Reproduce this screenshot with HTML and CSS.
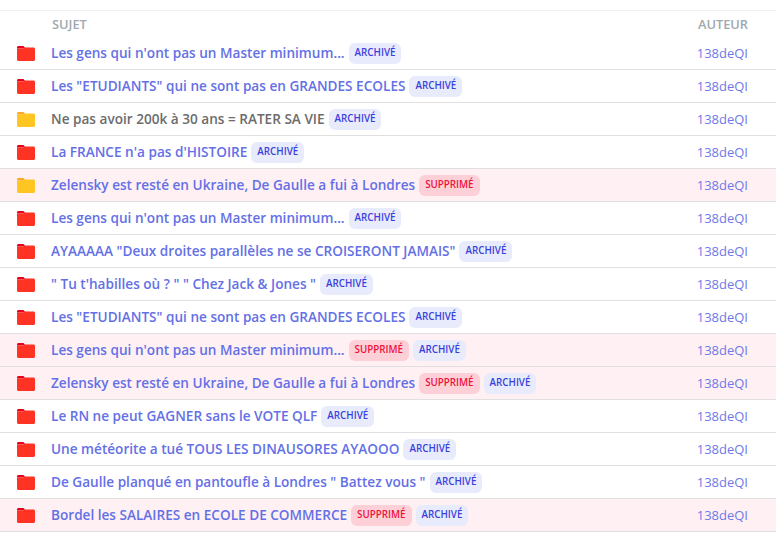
FILE: index.html
```html
<!DOCTYPE html>
<html lang="fr">
<head>
  <meta charset="UTF-8" />
  <title>Sujets</title>
  <link rel="stylesheet" href="styles.css">
</head>
<body>
  <svg class="defs" width="0" height="0">
    <symbol id="folder" viewBox="0 0 18 15">
      <path class="folder-tab" d="M1.5 0H6.5L8.5 2.5H0V1.5C0 .7 .7 0 1.5 0Z"/>
      <path class="folder-body" d="M0 2.5H6.5L7.5 1.5H16.5C17.3 1.5 18 2.2 18 3V13.5C18 14.3 17.3 15 16.5 15H1.5C.7 15 0 14.3 0 13.5Z"/>
    </symbol>
  </svg>
  <div class="topics">
    <div class="head">
      <span class="head-subject">SUJET</span>
      <span class="head-author">AUTEUR</span>
    </div>

    <div class="row">
      <svg class="folder red"><use href="#folder"/></svg>
      <div class="subject"><a>Les gens qui n'ont pas un Master minimum...</a><span class="badge archived">ARCHIVÉ</span></div>
      <a class="author">138deQI</a>
    </div>
    <div class="row">
      <svg class="folder red"><use href="#folder"/></svg>
      <div class="subject"><a>Les "ETUDIANTS" qui ne sont pas en GRANDES ECOLES</a><span class="badge archived">ARCHIVÉ</span></div>
      <a class="author">138deQI</a>
    </div>
    <div class="row">
      <svg class="folder yellow"><use href="#folder"/></svg>
      <div class="subject"><a class="visited">Ne pas avoir 200k à 30 ans = RATER SA VIE</a><span class="badge archived">ARCHIVÉ</span></div>
      <a class="author">138deQI</a>
    </div>
    <div class="row">
      <svg class="folder red"><use href="#folder"/></svg>
      <div class="subject"><a>La FRANCE n'a pas d'HISTOIRE</a><span class="badge archived">ARCHIVÉ</span></div>
      <a class="author">138deQI</a>
    </div>
    <div class="row deleted">
      <svg class="folder yellow"><use href="#folder"/></svg>
      <div class="subject"><a>Zelensky est resté en Ukraine, De Gaulle a fui à Londres</a><span class="badge removed">SUPPRIMÉ</span></div>
      <a class="author">138deQI</a>
    </div>
    <div class="row">
      <svg class="folder red"><use href="#folder"/></svg>
      <div class="subject"><a>Les gens qui n'ont pas un Master minimum...</a><span class="badge archived">ARCHIVÉ</span></div>
      <a class="author">138deQI</a>
    </div>
    <div class="row">
      <svg class="folder red"><use href="#folder"/></svg>
      <div class="subject"><a>AYAAAAA "Deux droites parallèles ne se CROISERONT JAMAIS"</a><span class="badge archived">ARCHIVÉ</span></div>
      <a class="author">138deQI</a>
    </div>
    <div class="row">
      <svg class="folder red"><use href="#folder"/></svg>
      <div class="subject"><a>" Tu t'habilles où ? " " Chez Jack &amp; Jones "</a><span class="badge archived">ARCHIVÉ</span></div>
      <a class="author">138deQI</a>
    </div>
    <div class="row">
      <svg class="folder red"><use href="#folder"/></svg>
      <div class="subject"><a>Les "ETUDIANTS" qui ne sont pas en GRANDES ECOLES</a><span class="badge archived">ARCHIVÉ</span></div>
      <a class="author">138deQI</a>
    </div>
    <div class="row deleted">
      <svg class="folder red"><use href="#folder"/></svg>
      <div class="subject"><a>Les gens qui n'ont pas un Master minimum...</a><span class="badge removed">SUPPRIMÉ</span><span class="badge archived">ARCHIVÉ</span></div>
      <a class="author">138deQI</a>
    </div>
    <div class="row deleted">
      <svg class="folder red"><use href="#folder"/></svg>
      <div class="subject"><a>Zelensky est resté en Ukraine, De Gaulle a fui à Londres</a><span class="badge removed">SUPPRIMÉ</span><span class="badge archived">ARCHIVÉ</span></div>
      <a class="author">138deQI</a>
    </div>
    <div class="row">
      <svg class="folder red"><use href="#folder"/></svg>
      <div class="subject"><a>Le RN ne peut GAGNER sans le VOTE QLF</a><span class="badge archived">ARCHIVÉ</span></div>
      <a class="author">138deQI</a>
    </div>
    <div class="row">
      <svg class="folder red"><use href="#folder"/></svg>
      <div class="subject"><a>Une météorite a tué TOUS LES DINAUSORES AYAOOO</a><span class="badge archived">ARCHIVÉ</span></div>
      <a class="author">138deQI</a>
    </div>
    <div class="row">
      <svg class="folder red"><use href="#folder"/></svg>
      <div class="subject"><a>De Gaulle planqué en pantoufle à Londres " Battez vous "</a><span class="badge archived">ARCHIVÉ</span></div>
      <a class="author">138deQI</a>
    </div>
    <div class="row deleted">
      <svg class="folder red"><use href="#folder"/></svg>
      <div class="subject"><a>Bordel les SALAIRES en ECOLE DE COMMERCE</a><span class="badge removed">SUPPRIMÉ</span><span class="badge archived">ARCHIVÉ</span></div>
      <a class="author">138deQI</a>
    </div>
  </div>
</body>
</html>
```

FILE: styles.css
```css
body {
  margin: 0;
  padding-top: 10px;
  background: #fff;
  font-family: "Open Sans", sans-serif;
  overflow: hidden;
}
.defs {
  position: absolute;
}
.topics {
  display: flex;
  flex-direction: column;
}
.head {
  display: flex;
  align-items: center;
  justify-content: space-between;
  height: 26px;
  padding: 0 28px 0 52px;
  border-top: 1px solid #f1f1f1;
  font-size: 12.8px;
  font-weight: 600;
  color: #a0a8b0;
}
.row {
  display: flex;
  align-items: center;
  height: 32px;
  padding: 0 28px 0 17px;
  border-bottom: 1px solid #e0e0e0;
}
.row.deleted {
  background: #fff1f3;
}
.folder {
  flex: none;
  width: 18px;
  height: 15px;
  margin-top: 1px;
  margin-right: 16px;
}
.folder.red {
  --tab: #e4001c;
  --body: #ff3324;
}
.folder.yellow {
  --tab: #ffa726;
  --body: #ffc623;
}
.folder-tab {
  fill: var(--tab);
}
.folder-body {
  fill: var(--body);
}
.subject {
  flex: 1;
  display: flex;
  align-items: center;
  font-size: 13.6px;
  font-weight: 600;
  color: #6470e6;
}
.subject a {
  margin-bottom: 2px;
}
.subject .visited {
  color: #6c6c6c;
}
.badge {
  height: 21px;
  line-height: 19px;
  margin-left: 4px;
  margin-top: 1px;
  padding: 0 6px;
  border-radius: 6px;
  font-size: 9.8px;
  font-weight: 550;
}
.badge.archived {
  background: #e8ebfb;
  color: #3a3fe0;
}
.badge.removed {
  background: #fdd0d8;
  color: #f0103c;
}
.author {
  font-size: 13px;
  color: #6f79e8;
}
```
